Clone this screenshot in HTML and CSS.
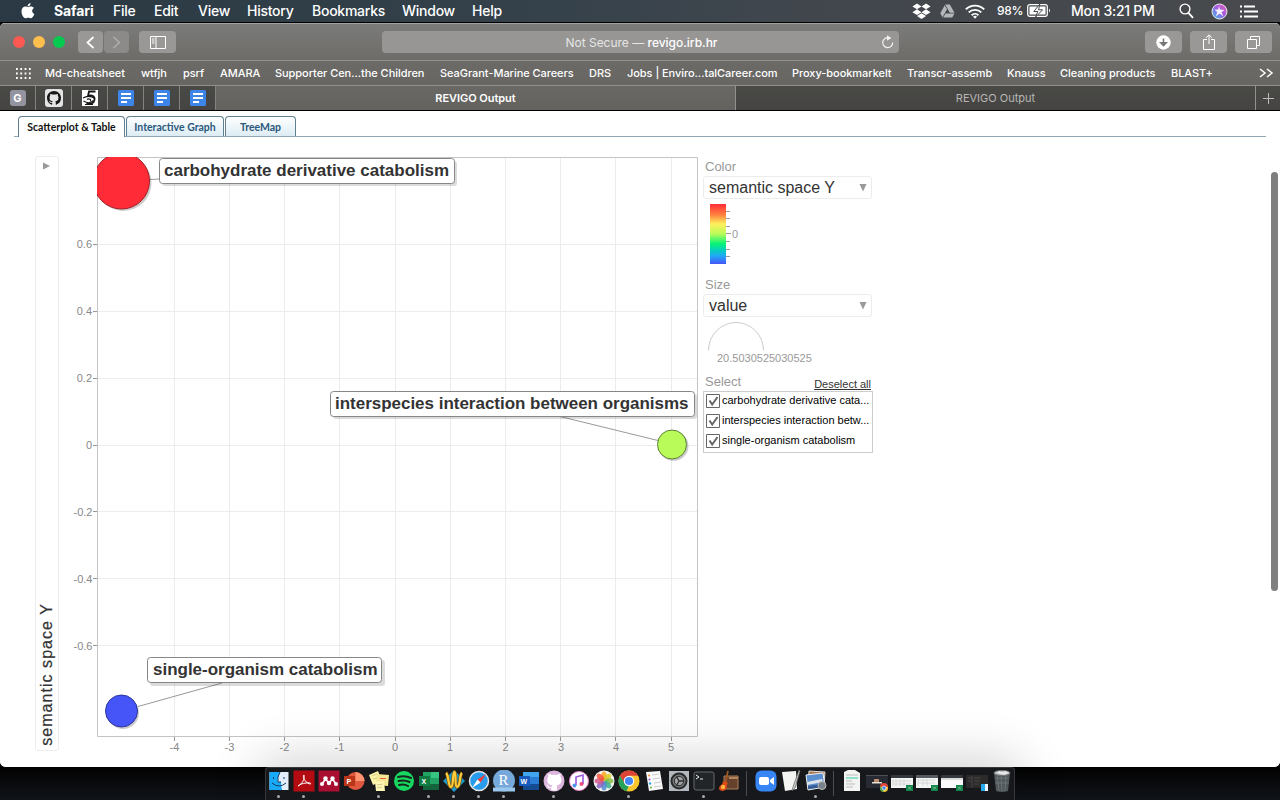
FILE: index.html
```html
<!DOCTYPE html>
<html lang="en">
<head>
<meta charset="utf-8">
<title>REVIGO Output</title>
<link rel="stylesheet" href="styles.css">
</head>
<body>
<header class="menubar">
  <svg class="apple" viewBox="0 0 14 16"><path fill="#fff" d="M9.6 0c.1 1.9-1.300 3.400-3 3.400C6.400 1.700 7.900.2 9.600 0zM7.100 4.300c.7 0 1.600-.7 2.900-.7 1.200 0 2.200.5 2.900 1.500-2.500 1.500-2.100 4.900.5 6-.7 1.900-2 4.200-3.400 4.200-1 0-1.400-.6-2.700-.6s-1.700.6-2.700.6C2.700 15.300.5 12 .5 8.600c0-3.200 1.900-5 3.800-5 1.200 0 2.100.7 2.800.7z"/></svg>
  <nav class="menus"><b>Safari</b><span>File</span><span>Edit</span><span>View</span><span>History</span><span>Bookmarks</span><span>Window</span><span>Help</span></nav>
  <div class="status">
    <svg width="19" height="17" viewBox="0 0 19 17"><path fill="#fff" d="M5 .5 9.500 3.400 5 6.300.4 3.400zM14 .5l4.600 2.900L14 6.300 9.500 3.400zM.4 9.200 5 6.300l4.500 2.900L5 12.100zM14 6.300l4.600 2.900L14 12.100 9.500 9.200zM5 13.100l4.500-2.900 4.500 2.900-4.500 2.900z"/></svg>
    <svg width="15" height="14" viewBox="0 0 15 14"><path fill="#b4b7ba" d="M5.200.5h4.600l4.700 8.200h-4.700zM4.700 1.300 7 5.300 2.500 13.300.3 9.300zM5.500 9.500h9L12.200 13.500H3.200z"/></svg>
    <svg width="20" height="15" viewBox="0 0 20 15"><g fill="none" stroke="#fff" stroke-width="1.900"><path d="M.8 5.400a13 13 0 0 1 18.400 0M3.700 8.400a9 9 0 0 1 12.600 0M6.600 11.200a5 5 0 0 1 6.800 0"/></g><path fill="#fff" d="m10 14.800-2-2.200q2-1.500 4 0z"/></svg>
    <span class="pct">98%</span>
    <svg width="24" height="14" viewBox="0 0 24 14"><rect x=".7" y=".7" width="19.600" height="11.600" rx="2" fill="none" stroke="#fff" stroke-width="1.200"/><rect x="2.500" y="2.500" width="16" height="8" fill="#fff"/><path d="M12.800 0 6.800 7.500h4L8.600 13l7-7.200h-4z" fill="#fff" stroke="#444a50"/><path d="M22 4.500q2 2 0 4z" fill="#fff"/></svg>
    <span class="clock">Mon 3:21 PM</span>
    <svg width="15" height="16" viewBox="0 0 15 16"><circle cx="6" cy="6" r="4.900" fill="none" stroke="#fff" stroke-width="1.400"/><path d="m9.500 9.800 4.500 5" stroke="#fff" stroke-width="1.800"/></svg>
    <svg width="17" height="17" viewBox="0 0 17 17"><defs><linearGradient id="siri" x1="1" x2="0" y2="1"><stop stop-color="#ee5fb0"/><stop offset=".45" stop-color="#a55be0"/><stop offset="1" stop-color="#2cc3e8"/></linearGradient></defs><circle cx="8.500" cy="8.500" r="7.500" fill="url(#siri)" stroke="#eee"/><path d="m8 3 1 3.500 4.500.5-3 2.200 1.800 4-3.800-2.700-3.700 3L6.300 9 3.500 6.800l3.700-.3z" fill="#fff" fill-opacity=".9"/></svg>
    <svg width="18" height="13" viewBox="0 0 18 13"><path d="M0 1.500h2M0 6.500h2M0 11.500h2M4 1.500h11M4 6.500h14M4 11.500h14" stroke="#fff" stroke-width="1.800"/></svg>
  </div>
</header>

<main class="window">
  <div class="toolbar">
    <div class="lights"><i class="red"></i><i class="amber"></i><i class="green"></i></div>
    <div class="navbtns"><span class="btn nav"><svg width="9" height="13" viewBox="0 0 9 13"><path d="m7.500 1-6 5.500 6 5.500" fill="none" stroke="#fff" stroke-width="1.700"/></svg></span><span class="btn nav"><svg width="9" height="13" viewBox="0 0 9 13"><path d="m1.500 1 6 5.500-6 5.500" fill="none" stroke="#b2b2b0" stroke-width="1.300"/></svg></span></div>
    <span class="btn side"><svg width="16" height="13" viewBox="0 0 16 13"><path d="M.5.500h15v12H.5zM6 .5v12M2 3h2.500M2 5h2.500M2 7h2.500" fill="none" stroke="#fff"/></svg></span>
    <div class="address"><span>Not Secure — <b>revigo.irb.hr</b></span><svg width="13" height="14" viewBox="0 0 13 14"><path d="M8.800 3.100a5 5 0 1 0 2.900 4.400" fill="none" stroke="#f2f2f2" stroke-width="1.200"/><path d="m6 .3 4.300 2.700L6 5.700z" fill="#f2f2f2"/></svg></div>
    <div class="actions">
      <span class="btn"><svg width="15" height="15" viewBox="0 0 15 15"><circle cx="7.500" cy="7.500" r="7.200" fill="#fff"/><path d="M7.500 3.500v6M4.800 7.700l2.700 2.900 2.700-2.900z" stroke="#777" stroke-width="1.600" fill="#777"/></svg></span>
      <span class="btn"><svg width="12" height="16" viewBox="0 0 12 16"><path d="M4 5.500H.5v10h11v-10H8M6 10V1M3 3.800 6 .9l3 2.900" fill="none" stroke="#fff"/></svg></span>
      <span class="btn"><svg width="13" height="13" viewBox="0 0 13 13"><path d="M.5 3.500h9v9h-9zM3.500 3.500v-3h9v9h-3" fill="none" stroke="#fff"/></svg></span>
    </div>
  </div>
  <nav class="bookmarks">
    <svg width="15" height="11" viewBox="0 0 15 11"><path d="M0 1h15M0 5.500h15M0 10h15" stroke="#fff" stroke-width="1.800" stroke-dasharray="1.800 2.500"/></svg>
    <span>Md-cheatsheet</span><span>wtfjh</span><span>psrf</span><span>AMARA</span><span>Supporter Cen...the Children</span><span>SeaGrant-Marine Careers</span><span>DRS</span><span>Jobs | Enviro...talCareer.com</span><span>Proxy-bookmarkelt</span><span>Transcr-assemb</span><span>Knauss</span><span>Cleaning products</span><span>BLAST+</span>
    <svg width="15" height="10" viewBox="0 0 15 10"><path d="m1 1 5 4-5 4M8 1l5 4-5 4" fill="none" stroke="#fff" stroke-width="1.500"/></svg>
  </nav>
  <div class="tabs">
    <span class="pin"><b class="g">G</b></span>
    <span class="pin"><svg width="18" height="18" viewBox="0 0 18 18"><rect width="18" height="18" rx="3" fill="#e4e4e4"/><path transform="translate(2 2) scale(.875)" fill="#181818" d="M8 0C3.580 0 0 3.580 0 8c0 3.540 2.290 6.530 5.470 7.590.4.070.55-.17.55-.38 0-.19-.01-.82-.01-1.490-2.010.37-2.530-.49-2.690-.94-.09-.23-.48-.94-.82-1.130-.28-.15-.68-.52-.01-.53.63-.01 1.080.58 1.230.82.72 1.210 1.870.87 2.330.66.070-.52.28-.87.51-1.070-1.780-.2-3.640-.89-3.640-3.950 0-.87.31-1.590.82-2.150-.08-.2-.36-1.020.08-2.120 0 0 .67-.21 2.200.82.640-.18 1.320-.27 2-.27s1.360.09 2 .27c1.530-1.040 2.200-.82 2.200-.82.440 1.100.160 1.920.080 2.120.510.560.820 1.270.820 2.150 0 3.070-1.870 3.750-3.650 3.950.290.250.540.730.540 1.480 0 1.070-.01 1.930-.01 2.200 0 .210.150.460.550.380A8 8 0 0 0 16 8c0-4.420-3.580-8-8-8z"/></svg></span>
    <span class="pin"><svg width="16" height="16" viewBox="0 0 16 16"><path d="M0 0h16v16H0z" fill="#fff"/><path d="M13.500 1.500H7L6 6c4-1.300 7 .2 6.500 4-.5 3.500-4.500 4.800-8 3.300" fill="none" stroke="#161616" stroke-width="1.800"/><path d="M1 8c4-2.500 8-2 12 .5M1.500 11c4 2.500 7 2.500 10-.5M5 9.500c2-1.500 5 .5 3 1.500M3 14.500h8" fill="none" stroke="#161616" stroke-width="1.100"/></svg></span>
    <span class="pin"><svg width="16" height="16" viewBox="0 0 16 16"><rect width="16" height="16" rx="1.500" fill="#3d85e8"/><path d="M3 4h10M3 8h10M3 12h6" stroke="#fff" stroke-width="2"/></svg></span>
    <span class="pin"><svg width="16" height="16" viewBox="0 0 16 16"><rect width="16" height="16" rx="1.500" fill="#3d85e8"/><path d="M3 4h10M3 8h10M3 12h6" stroke="#fff" stroke-width="2"/></svg></span>
    <span class="pin"><svg width="16" height="16" viewBox="0 0 16 16"><rect width="16" height="16" rx="1.500" fill="#3d85e8"/><path d="M3 4h10M3 8h10M3 12h6" stroke="#fff" stroke-width="2"/></svg></span>
    <span class="tab active">REVIGO Output</span><span class="tab">REVIGO Output</span>
    <span class="plus"><svg width="11" height="11" viewBox="0 0 11 11"><path d="M5.500 0v11M0 5.500h11" stroke="#bbb"/></svg></span>
  </div>

  <section class="page">
    <div class="views"><span class="view current">Scatterplot &amp; Table</span><span class="view v2">Interactive Graph</span><span class="view v3">TreeMap</span></div>
    <div class="plotrow">
      <div class="yaxis"><svg width="9" height="8" viewBox="0 0 9 8"><path d="M1 .5 8 4 1 7.500z" fill="#999"/></svg><span>semantic space Y</span></div>
      <svg class="chart" width="639" height="600" viewBox="59 156 639 600">
        <defs><clipPath id="area"><rect x="97" y="157" width="601" height="580"/></clipPath></defs>
        <path d="M174.500 157v579M229.500 157v579M284.500 157v579M339.500 157v579M395.500 157v579M450.500 157v579M505.500 157v579M560.500 157v579M615.500 157v579M671.500 157v579M97 244.500h600M97 311.500h600M97 378.500h600M97 445.500h600M97 511.500h600M97 578.500h600M97 645.500h600" stroke="#ececec"/>
        <path d="M97.500 157.500h600v579h-600z" fill="none" stroke="#c4c4c4"/>
        <path d="M93 244.500h4M93 311.500h4M93 378.500h4M93 445.500h4M93 511.500h4M93 578.500h4M93 645.500h4M174.500 737v4M229.500 737v4M284.500 737v4M339.500 737v4M395.500 737v4M450.500 737v4M505.500 737v4M560.500 737v4M615.500 737v4M671.500 737v4" stroke="#999"/>
        <g class="ticks" text-anchor="end"><text x="92" y="248">0.6</text><text x="92" y="315">0.4</text><text x="92" y="382">0.2</text><text x="92" y="449">0</text><text x="92.500" y="516">-0.2</text><text x="92.500" y="583">-0.4</text><text x="92.500" y="650">-0.6</text></g>
        <g class="ticks" text-anchor="middle"><text x="174.500" y="751">-4</text><text x="229.500" y="751">-3</text><text x="284.500" y="751">-2</text><text x="339.500" y="751">-1</text><text x="395" y="751">0</text><text x="450" y="751">1</text><text x="505.500" y="751">2</text><text x="561" y="751">3</text><text x="616" y="751">4</text><text x="671" y="751">5</text></g>
        <g clip-path="url(#area)">
          <path d="M150 179.500 160 179M560 416.500l98 24M222 683l-84 23.500" stroke="#999" fill="none"/>
          <g fill="#000" fill-opacity=".2"><circle cx="123.500" cy="183" r="28"/><circle cx="673.500" cy="446" r="15"/><circle cx="123" cy="713" r="16"/></g>
          <circle cx="121.500" cy="181" r="28" fill="#ff2c37" stroke="#a11d25"/>
          <circle cx="672" cy="444.500" r="14.500" fill="#b9fc5a" stroke="#5c7e3a"/>
          <circle cx="121.500" cy="711" r="16" fill="#4655f7" stroke="#2b3499"/>
        </g>
        <g fill="#000" fill-opacity=".14"><rect x="162" y="161" width="295" height="25" rx="3"/><rect x="333" y="394" width="364" height="25" rx="3"/><rect x="150" y="660" width="235" height="26" rx="3"/></g>
        <g fill="#fff" stroke="#868686"><rect x="159.500" y="158.500" width="295" height="25" rx="3"/><rect x="330.500" y="391.500" width="364" height="25" rx="3"/><rect x="147.500" y="657.500" width="234" height="25" rx="3"/></g>
        <g class="tags"><text x="164" y="176" textLength="285">carbohydrate derivative catabolism</text><text x="335" y="409" textLength="353.500">interspecies interaction between organisms</text><text x="153" y="675" textLength="224.500">single-organism catabolism</text></g>
      </svg>
      <aside class="panel">
        <h4>Color</h4>
        <div class="select"><span>semantic space Y</span><svg width="8" height="8" viewBox="0 0 8 8"><path d="M.5 0h7L4 7.500z" fill="#999"/></svg></div>
        <div class="legend"><i></i><svg width="5" height="60" viewBox="0 0 5 60"><path d="M0 7.500h4M0 14.500h4M0 22.500h4M0 29.500h5M0 37.500h4M0 45.500h4M0 52.500h4" stroke="#999"/></svg><span>0</span></div>
        <h4>Size</h4>
        <div class="select"><span>value</span><svg width="8" height="8" viewBox="0 0 8 8"><path d="M.5 0h7L4 7.500z" fill="#999"/></svg></div>
        <div class="size"><svg width="57" height="29" viewBox="0 0 57 29"><path d="M.5 28.500a27.500 28 0 0 1 55 0" fill="none" stroke="#ccc"/></svg><span>20.5030525030525</span></div>
        <div class="pickhead"><h4>Select</h4><u>Deselect all</u></div>
        <div class="picks">
          <label><svg width="14" height="14" viewBox="0 0 14 14"><path d="M.5.500h13v13H.5z" fill="#fff" stroke="#666"/><path d="m3.500 6.500 2.700 4L11.500 3" fill="none" stroke="#666" stroke-width="2"/></svg><span>carbohydrate derivative cata...</span></label>
          <label><svg width="14" height="14" viewBox="0 0 14 14"><path d="M.5.500h13v13H.5z" fill="#fff" stroke="#666"/><path d="m3.500 6.500 2.700 4L11.500 3" fill="none" stroke="#666" stroke-width="2"/></svg><span>interspecies interaction betw...</span></label>
          <label><svg width="14" height="14" viewBox="0 0 14 14"><path d="M.5.500h13v13H.5z" fill="#fff" stroke="#666"/><path d="m3.500 6.500 2.700 4L11.500 3" fill="none" stroke="#666" stroke-width="2"/></svg><span>single-organism catabolism</span></label>
        </div>
      </aside>
      <div class="scroll"></div>
    </div>
  </section>
</main>

<footer class="desktop"><div class="dock">
  <span class="app run"><svg viewBox="0 0 22 22"><path d="M1.500 2h19v18h-19z" fill="#e4eefa"/><path d="M1.500 2H12q-3 5-2 10h3q0 4 1 8H1.500z" fill="#18a9f7"/><path d="M5.500 7v2M16 7v2M4 13q7 6 14 0M12 2q-3 5-2 10h3" stroke="#123a5c" fill="none"/></svg></span>
  <span class="app run"><svg viewBox="0 0 22 22"><path d="M.5.500h21v21H.5z" fill="#b40b12"/><path d="M5 16c4-2 7-7 6-11-2 1 1 8 6 9 2 0 0-2-4-1-3 0-7 2-8 3z" fill="none" stroke="#fff"/></svg></span>
  <span class="app"><svg viewBox="0 0 22 22"><path d="M.5.500h21v21H.5z" fill="#a90f31"/><path d="m4 14 3.500-5 3.500 4 3.500-4 3.500 5" fill="none" stroke="#fff" stroke-width="1.600"/><g fill="#fff"><circle cx="4" cy="14" r="2"/><circle cx="7.500" cy="8.500" r="2.200"/><circle cx="11" cy="13" r="2.200"/><circle cx="14.500" cy="8.500" r="2.200"/><circle cx="18" cy="14" r="2"/></g></svg></span>
  <span class="app"><svg viewBox="0 0 22 22"><circle cx="12.500" cy="11" r="9" fill="#df573c"/><path d="M12.500 2a9 9 0 0 1 9 9h-9z" fill="#ff9472"/><path d="M1 6h11v10H1z" fill="#b93519"/><text x="3.500" y="14" class="letter">P</text></svg></span>
  <span class="app run"><svg viewBox="0 0 22 22"><path d="m1 5 9-4 4 10-9 4z" fill="#fff4a6"/><path d="m9 4 12 1-1 11-12-1z" fill="#f4e793"/><path d="m7 12 9-1 1 10H8z" fill="#fff7b4"/><path d="m4 6 5-2M5 9l4-1M9 15l6-1M9 18l5-1" stroke="#c5bd8a" stroke-width=".8"/><path d="M12 8.500h6" stroke="#ee5b3f"/></svg></span>
  <span class="app"><svg viewBox="0 0 22 22"><circle cx="11" cy="11" r="10" fill="#18d760"/><path d="M5 7q7-2 13 1M5.500 11q6-1.500 11 1M6 15q5-1.500 9 1" fill="none" stroke="#17251b" stroke-width="2" stroke-linecap="round"/></svg></span>
  <span class="app run"><svg viewBox="0 0 22 22"><path d="M5 2h16v18H5z" fill="#21a366"/><path d="M13 2h8v6h-8z" fill="#35c481"/><path d="M5 14h16v6H5z" fill="#15633c"/><path d="M1 6h11v10H1z" fill="#107c41"/><text x="3.500" y="14" class="letter">X</text></svg></span>
  <span class="app run"><svg viewBox="0 0 22 22"><path d="m11 0 11 11-11 11L0 11z" fill="#1b9ccc"/><path d="M3 3c3 2 2 14 5 14s1-14 3.500-15c2 1 0 15 2.500 15 4-1 2-12 5-14" fill="none" stroke="#795412" stroke-width="3.600"/><path d="M3 3c3 2 2 14 5 14s1-14 3.500-15c2 1 0 15 2.500 15 4-1 2-12 5-14" fill="none" stroke="#ffcd39" stroke-width="2.200"/></svg></span>
  <span class="app run"><svg viewBox="0 0 22 22"><circle cx="11" cy="11" r="9.500" fill="#279cec" stroke="#e0e3e6" stroke-width="1.500"/><path d="m18 4-5.500 8.500-3-3z" fill="#f53b35"/><path d="m4 18 8.500-5.500-3-3z" fill="#fff"/></svg></span>
  <span class="app run"><svg viewBox="0 0 22 22"><circle cx="11" cy="10.500" r="11" fill="#75a9db"/><path d="M0 17.500h22v4H0z" fill="#9ac8ed"/><text x="5.500" y="15" class="rletter">R</text></svg></span>
  <span class="app"><svg viewBox="0 0 22 22"><path d="M5 2h16v18H5z" fill="#2b7cd3"/><path d="M5 2h16v5H5z" fill="#41a5ee"/><path d="M5 14h16v6H5z" fill="#154c91"/><path d="M1 6h11v10H1z" fill="#185abd"/><text x="2.500" y="14" class="letter">W</text></svg></span>
  <span class="app run"><svg viewBox="0 0 22 22"><circle cx="11" cy="11" r="10.500" fill="#dbb5dc"/><path transform="translate(-.2 -.2) scale(1.400)" fill="#fff" d="M6 14.500c.1-.5 0-1.200 0-1.500-2 .4-2.500-.5-2.700-.9-.1-.3-.5-1-.8-1.200.8-.5 1.300.3 1.500.6.700 1.200 1.800.9 2.300.7.100-.6.300-.9.500-1.100-1.800-.2-3.600-.9-3.600-4 0-.8.300-1.600.8-2.100-.1-.2-.4-1 .1-2.100 0 0 .7-.2 2.200.8q2-.5 4 0c1.500-1 2.200-.8 2.200-.8.400 1.100.1 1.900.1 2.100.5.600.8 1.300.8 2.100 0 3.100-1.900 3.800-3.700 4 .3.200.5.700.5 1.500v2q-2.100.6-4.200-.1z"/></svg></span>
  <span class="app"><svg viewBox="0 0 22 22"><circle cx="11" cy="11" r="9.500" fill="#fff" stroke="#e885ce"/><path d="M8 15V7l7-2v9" fill="none" stroke="#9b58df" stroke-width="1.600"/><circle cx="6.500" cy="15.500" r="2" fill="#4e95ed"/><circle cx="13.500" cy="14" r="2" fill="#ef497d"/></svg></span>
  <span class="app"><svg viewBox="0 0 22 22"><circle cx="11" cy="11" r="10.500" fill="#f5f5f3"/><g fill-opacity=".85"><ellipse cx="11" cy="6" rx="2.700" ry="4.500" fill="#fba31e"/><ellipse cx="11" cy="6" rx="2.700" ry="4.500" fill="#d9ce24" transform="rotate(45 11 11)"/><ellipse cx="11" cy="6" rx="2.700" ry="4.500" fill="#84bd45" transform="rotate(90 11 11)"/><ellipse cx="11" cy="6" rx="2.700" ry="4.500" fill="#40af88" transform="rotate(135 11 11)"/><ellipse cx="11" cy="6" rx="2.700" ry="4.500" fill="#4e8bd0" transform="rotate(180 11 11)"/><ellipse cx="11" cy="6" rx="2.700" ry="4.500" fill="#8a64bd" transform="rotate(225 11 11)"/><ellipse cx="11" cy="6" rx="2.700" ry="4.500" fill="#d5568c" transform="rotate(270 11 11)"/><ellipse cx="11" cy="6" rx="2.700" ry="4.500" fill="#f1543d" transform="rotate(315 11 11)"/></g></svg></span>
  <span class="app run"><svg viewBox="0 0 22 22"><circle cx="11" cy="11" r="10.500" fill="#fbc62e"/><path d="M1.900 5.800a10.500 10.500 0 0 1 18.200 0H11v5.500L6.500 14z" fill="#dc4437"/><path d="M1.900 5.800 7 14l4 1.500-2.500 5.700A10.500 10.500 0 0 1 1.900 5.800z" fill="#26a35a"/><circle cx="11" cy="11" r="5.200" fill="#fff"/><circle cx="11" cy="11" r="4.100" fill="#4385f5"/></svg></span>
  <span class="app"><svg viewBox="0 0 22 22"><path d="m3 2 14-1 3 18-14 2z" fill="#fafafa"/><path d="m9 5 7-1M10 9l7-1M11 13l7-1M11 17l7-1" stroke="#ccc"/><g><circle cx="6" cy="5.500" r="1" fill="#f58a28"/><circle cx="6.500" cy="9.500" r="1" fill="#a24ed4"/><circle cx="7" cy="13.500" r="1.200" fill="#31a5e5"/><circle cx="8" cy="17.500" r="1" fill="#61bc40"/></g></svg></span>
  <span class="app"><svg viewBox="0 0 22 22"><path d="M1 1h20v20H1z" fill="#b2b8bd"/><circle cx="11" cy="11" r="7.500" fill="#77797b" stroke="#292b2c" stroke-width="2"/><circle cx="11" cy="11" r="4.700" fill="#a2a4a5" stroke="#292b2c"/><path d="M11 11h5M11 11 8.500 6.500M11 11l-2.500 4.500" stroke="#292b2c" stroke-width="1.300"/></svg></span>
  <span class="app run"><svg viewBox="0 0 22 22"><rect x="1" y="2" width="20" height="18" rx="2" fill="#222527" stroke="#666b6e"/><path d="m3 5 3 2-3 2M7 9h3" stroke="#eee" fill="none"/></svg></span>
  <span class="app"><svg viewBox="0 0 22 22"><path d="M6 6h14v13H6z" fill="#66412c" stroke="#ad805b"/><path d="M11 7h9v2h-9z" fill="#b6845b"/><path d="m7 14 3-13" stroke="#a65a22" stroke-width="1.700"/><path d="M5 11q1 1 3 0l2 3q-2 1-1 3-1 4-5 4-5-1-2-5 3-2 3-5z" fill="#da4b17"/><circle cx="5" cy="17" r="2.200" fill="#ffb33b"/></svg></span>
  <i class="sep first"></i>
  <span class="app"><svg viewBox="0 0 22 22"><rect x=".5" y=".5" width="21" height="21" rx="6" fill="#3784f5"/><rect x="4" y="7" width="10" height="8" rx="2" fill="#fff"/><path d="m15 10 4-3v8l-4-3z" fill="#fff"/></svg></span>
  <span class="app"><svg viewBox="0 0 22 22"><path d="m2 2 14-1 1 18-12 2z" fill="#f4f4f2"/><path d="M19 0 13 17l-1 4 3-3 5-17z" fill="#d1d2ce" stroke="#5d5e5d" stroke-width=".7"/></svg></span>
  <span class="app run"><svg viewBox="0 0 22 22"><path d="m4 1 16 1-1 14-16-1z" fill="#aa7751" stroke="#ddd"/><path d="m1 5 17-2 2 14-17 3z" fill="#5b8fcf" stroke="#eee"/><path d="m2 12 15-3 1 3-16 3z" fill="#dbe4ec"/><path d="m3 16 15-2v3L3 19z" fill="#365b91"/><circle cx="17" cy="15.500" r="4" fill="#778189" stroke="#bbb"/></svg></span>
  <i class="sep second"></i>
  <span class="app"><svg viewBox="0 0 22 22"><path d="M3 2 7 0h7l5 3v18H3z" fill="#f3f4f2"/><path d="M5 5h12M5 11h6M5 14h9M5 17h7" stroke="#bbb"/><path d="M5 8h12" stroke="#6fdcbc" stroke-width="1.500"/></svg></span>
  <span class="app"><svg viewBox="0 0 22 22"><path d="M0 5h22v13H0z" fill="#272a32"/><path d="M0 5h22v1H0z" fill="#4a4e55"/><path d="M6 12h10v1.500H6z" fill="#e7ded5"/><path d="M8 9h5v3H8z" fill="#bd8d6c"/><circle cx="18" cy="18" r="4" fill="#f3c331"/><path d="M14 17a4 4 0 0 1 8 0z" fill="#df4637"/><path d="M14.500 16 18 22q-5-1-3.500-6z" fill="#26a35a"/><circle cx="18" cy="18" r="2" fill="#4285f4" stroke="#fff" stroke-width=".6"/></svg></span>
  <span class="app"><svg viewBox="0 0 22 22"><path d="M0 5h22v13H0z" fill="#f4f4f4"/><path d="M0 5h22v3H0z" fill="#34373b"/><path d="M2 9v7M5 9v7M9 9v7M13 9v7M2 11h18M2 14h18" stroke="#d6d6d6"/><path d="M15 15h7v6h-7z" fill="#138449"/><path d="m17 16.500 3 3m0-3-3 3" stroke="#9fd5b7" stroke-width=".7"/></svg></span>
  <span class="app"><svg viewBox="0 0 22 22"><path d="M0 5h22v13H0z" fill="#f4f4f4"/><path d="M0 5h22v3H0z" fill="#56595d"/><path d="M2 9v7M7 9v7M11 9v7M2 10h17M2 13h17" stroke="#d6d6d6"/><path d="M15 15h7v6h-7z" fill="#138449"/><path d="m17 16.500 3 3m0-3-3 3" stroke="#9fd5b7" stroke-width=".7"/></svg></span>
  <span class="app"><svg viewBox="0 0 22 22"><path d="M0 5h22v13H0z" fill="#fafafa"/><path d="M0 5h22v3H0z" fill="#34373b"/><path d="M0 9h22" stroke="#bbb"/><path d="M15 15h7v6h-7z" fill="#138449"/><path d="m17 16.500 3 3m0-3-3 3" stroke="#9fd5b7" stroke-width=".7"/></svg></span>
  <span class="app"><svg viewBox="0 0 22 22"><path d="M0 5h22v13H0z" fill="#2c2b2a"/><path d="M6 6v11M8 8h6M8 11h6M8 14h5M2 8h3M2 11h3" stroke="#484746"/><path d="M15 14h7v7h-7z" fill="#eaf3fa"/><path d="M15 14h4v7h-4z" fill="#22a9ee"/></svg></span>
  <span class="app"><svg viewBox="0 0 22 22"><path d="m3 3 2 18q6 2 12 0l2-18z" fill="#50575a"/><path d="m6 4 2 17M10 4l1 17M15 4l-1 17M4 8h14M4 13h14" stroke="#7d8587" stroke-width=".6"/><ellipse cx="11" cy="3" rx="8" ry="2.500" fill="#b5b9ba" stroke="#6e7476"/><path d="m5 3 3-2 3 1 4-1 3 2-5 2z" fill="#e5e6e5"/></svg></span>
</div></footer>
</body>
</html>
```
FILE: styles.css
```css
* { box-sizing: border-box; }
body { margin: 0; width: 1280px; height: 800px; overflow: hidden; background: #090b0e; font-family: Inter, "Liberation Sans", sans-serif; display: flex; flex-direction: column; }
svg { display: block; flex: none; }

.menubar { height: 23px; flex: none; background: linear-gradient(90deg, #2a3943, #34414b 40%, #42474d 65%, #484a4d); color: #fff; display: flex; align-items: center; padding: 0 22px 0 21px; font-size: 14px; border-bottom: 1px solid #000; }
.apple { width: 14px; height: 16px; margin-top: -1px; }
.menus { margin-left: 19px; display: grid; grid-template-columns: 59px 41px 44px 49px 65px 90px 70px 40px; font-weight: 500; letter-spacing: -.25px; margin-top: -1px; }
.menus b { font-weight: 700; letter-spacing: -.1px; }
.menus span, .menus b { white-space: nowrap; }
.status { margin-left: auto; display: flex; align-items: center; }
.status svg:nth-child(2) { margin-left: 9px; }
.status svg:nth-child(3) { margin-left: 10px; }
.pct { width: 26px; margin: -1px 4px 0 12px; font-size: 12px; letter-spacing: -.3px; font-weight: 500; }
.clock { margin: -1px 24px 0 20px; width: 84px; white-space: nowrap; font-weight: 500; letter-spacing: -.25px; }
.status svg:nth-child(8) { margin-left: 17px; }
.status svg:nth-child(9) { margin-left: 12px; }

.window { height: 744px; flex: none; border-radius: 5px 5px 6px 6px; overflow: hidden; background: #fff; display: flex; flex-direction: column; }
.toolbar { height: 38px; flex: none; background: linear-gradient(#7b7b79, #6d6c69); border-top: 1px solid #a2a2a0; border-bottom: 1px solid #92918f; display: flex; align-items: center; padding: 0 8px 0 13px; }
.lights { display: flex; gap: 8px; }
.lights i { width: 12px; height: 12px; border-radius: 50%; }
.red { background: #ff5952; }
.amber { background: #ffbe4d; }
.green { background: #06ca4f; }
.btn { width: 37px; height: 22px; border-radius: 4px; background: #999896; display: flex; align-items: center; justify-content: center; }
.navbtns { display: flex; gap: 1px; margin-left: 13px; }
.nav { width: 25px; }
.nav + .nav { background: #8b8a88; }
.side { margin-left: 10px; }
.address { width: 517px; height: 22px; margin-left: 206px; border-radius: 4px; background: #979694; color: #e5e5e4; display: flex; align-items: center; padding-right: 5px; font-size: 12px; letter-spacing: -.02px; }
.address span { flex: 1; text-align: center; padding-left: 20px; }
.address b { font-weight: 500; color: #fff; }
.actions { margin-left: auto; display: flex; gap: 8px; }

.bookmarks { height: 25px; flex: none; background: linear-gradient(#6b6a67, #676663); border-bottom: 1px solid #92918f; display: grid; align-items: center; padding-left: 16px; grid-template-columns: 29px 96px 42px 37px 55px 165px 149px 38px 165px 115px 100px 53px 111px 88px 15px; color: #fff; font-size: 11px; font-weight: 500; letter-spacing: -.05px; white-space: nowrap; }
.tabs { height: 25px; flex: none; background: linear-gradient(#494946, #454442); border-bottom: 1px solid #000; display: flex; font-size: 11px; color: #b7b7b5; }
.pin { width: 36px; border-right: 1px solid #83827f; display: flex; align-items: center; justify-content: center; }
.g { width: 16px; height: 16px; border-radius: 3px; background: #9494a0; color: #fff; font-size: 11px; line-height: 16px; text-align: center; }
.tab { width: 520px; border-right: 1px solid #92918f; text-align: center; line-height: 25px; }
.active { background: linear-gradient(#696865, #63625f); color: #fff; font-weight: 600; letter-spacing: -.05px; }
.plus { flex: 1; display: flex; align-items: center; justify-content: center; }

.page { flex: 1; background: #fff; padding-top: 5px; }
.views { height: 21px; margin: 0 14px; padding-left: 4px; border-bottom: 1px solid #91a7b4; display: flex; gap: 1px; font-family: Lato, sans-serif; font-weight: 700; font-size: 10.500px; }
.view { height: 20px; border: 1px solid #607f91; border-bottom: 0; border-radius: 4px 4px 0 0; background: linear-gradient(#fff, #dcecf4); color: #2b587c; text-align: center; line-height: 20px; white-space: nowrap; }
.current { width: 107px; height: 21px; background: #fff; color: #111; }
.v2 { width: 98px; }
.v3 { width: 71px; }
.plotrow { display: flex; align-items: flex-start; padding: 19px 2px 0 35px; font-family: "Liberation Sans", Arial, sans-serif; }
.yaxis { width: 24px; height: 595px; border: 1px solid #ececec; border-radius: 3px; display: flex; flex-direction: column; align-items: center; justify-content: space-between; padding: 5px 0 4px; }
.yaxis svg { margin-right: 1px; }
.yaxis span { writing-mode: vertical-rl; transform: rotate(180deg); font-size: 16px; letter-spacing: 1.050px; color: #333; line-height: 20px; white-space: nowrap; -webkit-text-stroke: .2px #333; }
.ticks text { font-size: 11px; fill: #888; }
.tags text { font-size: 17px; font-weight: 700; fill: #333; }
.panel { width: 170px; margin-left: 5px; padding-top: 2px; color: #999; }
.panel h4 { margin: 0; font-size: 13px; font-weight: 400; line-height: 17px; padding-left: 2px; }
.select { width: 169px; height: 23px; margin-top: 1px; border: 1px solid #ececec; border-radius: 3px; display: flex; align-items: center; justify-content: space-between; padding: 0 4px 0 5px; font-size: 16px; color: #333; }
.legend { display: flex; height: 60px; margin: 5px 0 12px 7px; font-size: 11px; line-height: 60px; }
.legend i { width: 16px; background: linear-gradient(#ff2c37, #ff813f 18%, #ffef5b 33%, #b9fc5a 50%, #08f575 66%, #08c8ca 79%, #24a5f8 87%, #4655f7); }
.legend span { margin-left: 1px; }
.size { height: 48px; padding: 5px 0 0 5px; font-size: 11px; line-height: 14px; }
.size span { display: block; padding-left: 9px; }
.pickhead { display: flex; justify-content: space-between; padding: 8px 2px 0 0; height: 26px; }
.pickhead u { color: #333; font-size: 11px; line-height: 22px; }
.picks { width: 170px; height: 62px; border: 1px solid #ccc; padding: 2px; font-size: 11px; color: #000; white-space: nowrap; }
.picks label { display: flex; height: 20px; gap: 2px; }
.scroll { width: 7px; height: 419px; margin: 16px 0 0 auto; border-radius: 4px; background: #7f7f7f; }

.desktop { height: 33px; flex: none; background: linear-gradient(#020202, #10141a); display: flex; justify-content: center; }
.dock { width: 750px; height: 33px; background: #17181b; border: 1px solid #36373a; border-bottom: 0; border-radius: 4px 4px 0 0; display: flex; box-shadow: 0 0 50px 6px rgba(0, 0, 0, .2); position: relative; }
.app { width: 25px; height: 32px; padding-top: 2px; display: flex; flex-direction: column; align-items: center; flex: none; }
.app > svg { width: 22px; height: 22px; }
.run::after { content: ""; width: 3px; height: 3px; border-radius: 50%; background: #aaa; margin-top: 3px; }
.sep { width: 1px; height: 25px; background: #4c4c4e; flex: none; margin-top: 3px; }
.first { margin-left: 5px; margin-right: 6px; }
.second { margin-left: 5px; margin-right: 5px; }
.letter { font: 700 7px "Liberation Sans", sans-serif; fill: #fff; }
.rletter { font: 15px "Liberation Serif", serif; fill: #fff; }
```
